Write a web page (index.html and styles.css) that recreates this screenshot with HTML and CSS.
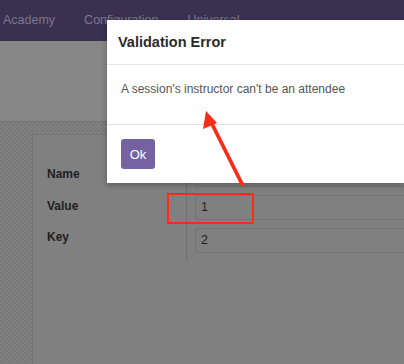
FILE: index.html
```html
<!DOCTYPE html>
<html lang="en">
<head>
    <meta charset="UTF-8">
    <meta name="viewport" content="width=device-width, initial-scale=1.0">
    <title>Validation Error</title>
    <link rel="stylesheet" href="styles.css">
</head>
<body>
    <div class="navbar">
        <span>Academy</span>
        <span>Configuration</span>
        <span>Universal</span>
    </div>

    <div class="control-panel"></div>

    <div class="content">
        <div class="sheet">
            <div class="group">
                <div class="labels">
                    <div class="label">Name</div>
                    <div class="label">Value</div>
                    <div class="label">Key</div>
                </div>
                <div class="fields">
                    <div class="field"></div>
                    <div class="field">1</div>
                    <div class="field">2</div>
                </div>
            </div>
        </div>
    </div>

    <!-- dialog -->
    <div class="modal">
        <div class="modal-header">Validation Error</div>
        <div class="modal-body">A session's instructor can't be an attendee</div>
        <div class="modal-footer">
            <button class="btn-ok">Ok</button>
        </div>
    </div>

    <!-- annotations -->
    <div class="highlight"></div>
    <svg class="arrow" width="404" height="364" viewBox="0 0 404 364">
        <line x1="243" y1="186" x2="211" y2="122" stroke="#ff2b18" stroke-width="3.8"/>
        <polygon points="206,111 203,129 217,123" fill="#ff2b18"/>
    </svg>
</body>
</html>
```

FILE: styles.css
```css
body {
    margin: 0;
    width: 404px;
    height: 364px;
    overflow: hidden;
    font-family: 'Liberation Sans', Arial, sans-serif;
    background: #7c7c7c;
}
.navbar {
    height: 41px;
    background: #3a3150;
    display: flex;
    align-items: center;
    gap: 29px;
    padding-left: 3px;
    padding-bottom: 1px;
    box-sizing: border-box;
    font-size: 12.5px;
    color: #7d778c;
}
.control-panel {
    height: 80px;
    background: #878787;
    border-bottom: 1px solid #737373;
}
.content {
    height: 242px;
    padding: 12px 0 0 32px;
    box-sizing: border-box;
    background: repeating-conic-gradient(#7a7a7a 0 25%, #818181 0 50%) 0 0 / 4px 4px;
}
.sheet {
    height: 100%;
    background: #808080;
    border-left: 1px solid #727272;
    border-top: 1px solid #767676;
    padding: 27px 0 0 14px;
    box-sizing: border-box;
}
.group {
    display: flex;
}
.labels {
    width: 139px;
    border-right: 1px solid #707070;
    padding-bottom: 2px;
}
.label {
    height: 31.5px;
    line-height: 24px;
    font-size: 12px;
    font-weight: bold;
    color: #1f1f1f;
}
.fields {
    flex: 1;
    padding-left: 8px;
}
.field {
    height: 23px;
    margin-bottom: 8px;
    border: 1px solid #747474;
    border-right: none;
    border-radius: 3px 0 0 3px;
    padding-left: 5px;
    line-height: 23px;
    font-size: 12.5px;
    color: #1f1f1f;
}
.modal {
    position: absolute;
    left: 107px;
    top: 20px;
    right: 0;
    background: white;
    box-shadow: 0 2px 6px rgba(0,0,0,0.3);
}
.modal-header {
    height: 44px;
    line-height: 44px;
    padding-left: 11px;
    font-size: 14.5px;
    font-weight: bold;
    color: #2b2b2b;
    border-bottom: 1px solid #e8e8e8;
}
.modal-body {
    height: 59px;
    line-height: 48px;
    padding-left: 14px;
    font-size: 12px;
    color: #555;
    border-bottom: 1px solid #e2e2e2;
}
.modal-footer {
    height: 58px;
    padding: 14px 0 0 14px;
    box-sizing: border-box;
}
.btn-ok {
    width: 34px;
    height: 30px;
    padding: 0;
    border: none;
    border-radius: 3px;
    background: #7462a2;
    color: white;
    font-family: 'Liberation Sans', Arial, sans-serif;
    font-size: 13px;
}
.highlight {
    position: absolute;
    left: 167px;
    top: 193px;
    width: 83px;
    height: 27px;
    border: 2px solid #ff2b18;
}
.arrow {
    position: absolute;
    left: 0;
    top: 0;
}
```
